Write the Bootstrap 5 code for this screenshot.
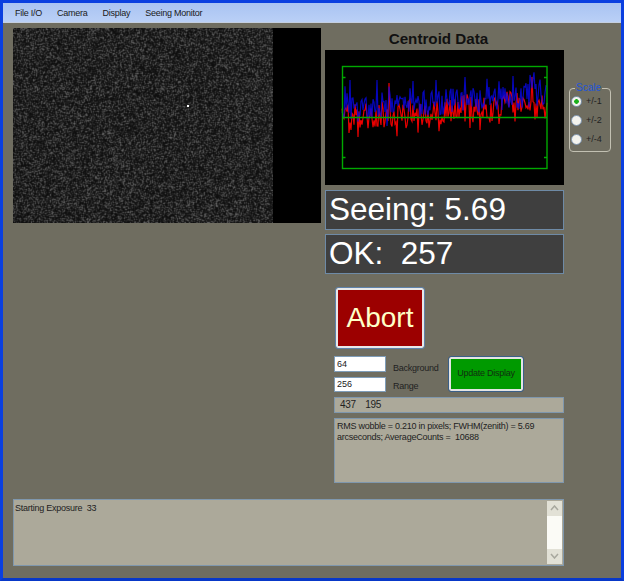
<!DOCTYPE html>
<html lang="en">
<head>
<meta charset="utf-8">
<title>Seeing Monitor</title>
<link href="https://cdn.jsdelivr.net/npm/bootstrap@5.3.0/dist/css/bootstrap.min.css" rel="stylesheet">
<style>
html,body{margin:0;padding:0;background:#fff;overflow:hidden}
body{font-family:"Liberation Sans",Arial,sans-serif;font-size:9px;letter-spacing:-.25px;color:#111}
.app-win{width:624px;height:581px;background:#6f6d60;border:3px solid #0a3fe0;border-bottom-color:#0838c8;filter:blur(.3px)}
.app-menu{height:20px;background:linear-gradient(#a9c3f2,#bad0f6);border-bottom:1px solid #c4cfe0;padding-left:12px;gap:15px;align-items:center;font-size:9px;color:#1a1a1a}
.app-menu span{line-height:20px}
.app-main{padding:5px 0 0 10px;gap:4px;align-items:flex-start}
.app-left{width:308px;height:195px;background:#000;flex:none;display:block}
.app-right{width:239px;flex:none}
.app-title{font-size:15.2px;font-weight:700;line-height:18px;letter-spacing:0;color:#111;text-align:center;margin-top:2px;height:20px;padding-right:12px}
.app-chart{display:block;width:239px;height:135px;background:#000}
.app-big{height:40px;background:#3f3f3f;border:1px solid #6e8aa6;color:#fff;font-size:31.5px;letter-spacing:0;line-height:37px;padding-left:3px;white-space:pre}
.app-big + .app-big{margin-top:4px}
.app-chart + .app-big{margin-top:5px}
.app-abort{display:block;width:88px;height:60px;margin:14px 0 0 11px;background:#9c0000;color:#ffffc8;font-size:28px;letter-spacing:0;border:2px solid #e8e8e8;outline:1px solid #5f82aa;border-radius:2px;padding:0;line-height:56px}
.app-ctrl{margin:8px 0 0 9px;height:36px}
.app-inputs{width:52px;gap:5px;flex:none}
.app-field{width:52px;height:16px;font-size:9px;padding:0 2px;border:1px solid #7f9db9;background:#fff;color:#222;border-radius:0;line-height:14px;display:block}
.app-labels{width:47px;margin-left:7px;flex:none;color:#222;padding-top:3px;line-height:18px;white-space:nowrap}
.app-update{width:74px;height:34px;margin:1px 0 0 9px;background:#009a00;border:2px solid #e4e4e4;outline:1px solid #3a5f88;border-radius:2px;font-size:9px;letter-spacing:-.25px;padding:0;color:#103010}
.app-box{background:#aca99a;border:1px solid #7f97ad;margin-left:9px;color:#222}
.app-coord{height:16px;margin-top:5px;line-height:14px;padding-left:5px;white-space:pre;font-size:10px;letter-spacing:-.3px;word-spacing:-.1px}
.app-rms{height:65px;margin-top:5px;line-height:11px;padding:2px 2px;white-space:pre-wrap}
.app-scale{width:42px;height:69px;margin:55px 0 0 1px;border:1px solid #c2c0b2;border-radius:4px;padding:0;position:relative;flex:none}
.app-scale legend{float:none;width:auto;font-size:10px;line-height:10px;letter-spacing:0;color:#1f55d8;margin:0 0 -1px 5px;padding:0 1px}
.app-opt{height:19px;gap:4px;align-items:center;padding-left:1px;color:#222;font-size:9px;letter-spacing:0}
.app-opt input{appearance:none;-webkit-appearance:none;width:11px;height:11px;border-radius:50%;border:1px solid #7d93ad;background:#f3f3ee;margin:0;flex:none}
.app-opt input:checked{background:radial-gradient(circle,#1ab01a 0 2px,#f3f3ee 2.6px)}
.app-log{width:551px;height:67px;margin:16px 0 0 10px;background:#aca99a;border:1px solid #7f97ad}
.app-logtext{padding:2px 1px;line-height:12px;color:#222;white-space:pre}
.app-sb{width:15px;background:#fbfbf6;justify-content:space-between;margin:1px}
.app-sbb{height:15px;background:#e2e1d6;color:#8b8b80;display:block}
.app-sbb svg{display:block;margin:4px auto 0}
</style>
</head>
<body>
<div class="app-win d-flex flex-column">
  <div class="app-menu d-flex flex-none"><span>File I/O</span><span>Camera</span><span>Display</span><span>Seeing Monitor</span></div>
  <div class="app-main d-flex">
    <canvas class="app-left" id="cam" width="308" height="195"></canvas>
    <div class="app-right">
      <div class="app-title">Centroid Data</div>
      <svg class="app-chart" id="chart" viewBox="0 0 239 135">
        <g id="traces" fill="none" stroke-width="1.2"></g>
        <g stroke="#00a800" stroke-width="1.4" fill="none">
          <rect x="17.5" y="16.5" width="204.5" height="102"/>
          <path d="M17.500 67.500H222M17.500 27.500h3M17.500 107.500h3M222 27.500h-3M222 107.500h-3"/>
        </g>
      </svg>
      <div class="app-big">Seeing: 5.69</div>
      <div class="app-big">OK:  257</div>
      <button class="app-abort btn" type="button">Abort</button>
      <div class="app-ctrl d-flex">
        <div class="app-inputs d-flex flex-column">
          <input class="app-field" type="text" value="64" aria-label="Background">
          <input class="app-field" type="text" value="256" aria-label="Range">
        </div>
        <div class="app-labels"><div>Background</div><div>Range</div></div>
        <button class="app-update btn" type="button">Update Display</button>
      </div>
      <div class="app-box app-coord">437    195</div>
      <div class="app-box app-rms">RMS wobble = 0.210 in pixels; FWHM(zenith) = 5.69 arcseconds; AverageCounts =  10688</div>
    </div>
    <fieldset class="app-scale">
      <legend>Scale</legend>
      <label class="app-opt d-flex"><input type="radio" name="sc" checked>+/-1</label>
      <label class="app-opt d-flex"><input type="radio" name="sc">+/-2</label>
      <label class="app-opt d-flex"><input type="radio" name="sc">+/-4</label>
    </fieldset>
  </div>
  <div class="app-log d-flex justify-content-between">
    <div class="app-logtext">Starting Exposure  33</div>
    <div class="app-sb d-flex flex-column">
      <span class="app-sbb"><svg width="9" height="6" viewBox="0 0 9 6"><path d="M1 5l3.500-4L8 5" fill="none" stroke="#a8a89e" stroke-width="1.500"/></svg></span>
      <span class="app-sbb"><svg width="9" height="6" viewBox="0 0 9 6"><path d="M1 1l3.500 4L8 1" fill="none" stroke="#a8a89e" stroke-width="1.500"/></svg></span>
    </div>
  </div>
</div>
<script>
let seed=12345;
function rnd(){seed=(seed+0x6D2B79F5)|0;let t=Math.imul(seed^(seed>>>15),1|seed);t=(t+Math.imul(t^(t>>>7),61|t))^t;return((t^(t>>>14))>>>0)/4294967296}
const c=document.getElementById('cam').getContext('2d');
c.fillStyle='#000';c.fillRect(0,0,308,195);
const W=260,H=195,n=new Float32Array(W*H);
for(let i=0;i<W*H;i++)n[i]=Math.pow(rnd(),3);
const img=c.createImageData(W,H);
for(let y=0;y<H;y++)for(let x=0;x<W;x++){
  const g=(a,b)=>n[Math.min(H-1,Math.max(0,b))*W+Math.min(W-1,Math.max(0,a))];
  const s=(g(x,y)*4+g(x-1,y)+g(x+1,y)+g(x,y-1)+g(x,y+1))/8;
  const v=Math.min(115,14+s*92);
  const i=(y*W+x)*4;img.data[i]=img.data[i+1]=img.data[i+2]=v;img.data[i+3]=255;
}
c.putImageData(img,0,0);
c.fillStyle='#fff';c.fillRect(174,77,2,2);
function trace(base,trend,amp,spikes,color,down,op){
  let pts=[];
  for(let x=17;x<=222;x+=1){
    const t=(x-17)/205;
    let y=base-t*trend+(rnd()-0.5)*amp;
    if(rnd()<0.18)y+=down*(5+rnd()*10);
    pts.push(x+','+y.toFixed(1));
  }
  spikes.forEach(s=>{pts[s[0]-17]=s[0]+','+s[1]});
  const p=document.createElementNS('http://www.w3.org/2000/svg','polyline');
  p.setAttribute('points',pts.join(' '));p.setAttribute('stroke',color);p.setAttribute('stroke-opacity',op);
  document.getElementById('traces').appendChild(p);
}
trace(68,18,26,[[33,87],[81,78],[145,78],[155,80],[119,72],[64,33],[207,27]],'#e80000',1,1);
trace(60,16,26,[[25,30],[62,76],[28,48],[111,30],[140,27],[205,25],[52,30]],'#0808e8',-1,.8);
</script>
<script src="https://cdn.jsdelivr.net/npm/bootstrap@5.3.0/dist/js/bootstrap.bundle.min.js"></script>
</body>
</html>
